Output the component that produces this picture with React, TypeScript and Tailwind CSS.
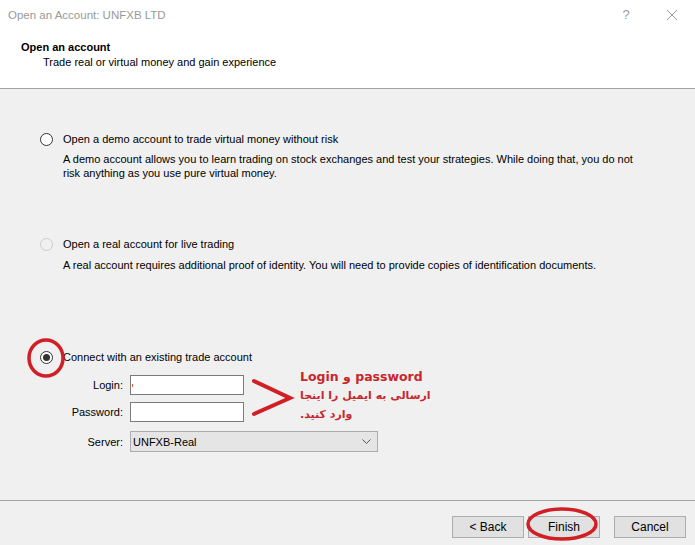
import React from 'react';

const ui = "font-['Liberation_Sans',Arial,sans-serif] text-[11px] leading-[14px] text-black";

function Radio({ state }: { state: 'off' | 'on' | 'disabled' }) {
  if (state === 'disabled') {
    return <span className="w-[13px] h-[13px] rounded-full border border-[#cccccc] bg-[#f0f0f0] shrink-0" />;
  }
  return (
    <span className="w-[13px] h-[13px] rounded-full border border-[#333333] bg-white shrink-0 flex items-center justify-center">
      {state === 'on' && <span className="w-[7px] h-[7px] rounded-full bg-[#333333]" />}
    </span>
  );
}

function Option({ state, label, children, className }: { state: 'off' | 'on' | 'disabled'; label: string; children?: React.ReactNode; className?: string }) {
  return (
    <div className={className}>
      <div className="flex items-center gap-[10px] pl-[40px]">
        <Radio state={state} />
        <span>{label}</span>
      </div>
      {children}
    </div>
  );
}

function Button({ label, className }: { label: string; className?: string }) {
  return (
    <button className={`w-[72px] h-[22px] bg-[#e1e1e1] border border-[#adadad] text-[12px] text-black ${className ?? ''}`}>
      {label}
    </button>
  );
}

export default function App() {
  return (
    <div className={`${ui} relative w-[695px] h-[545px] bg-[#f0f0f0] flex flex-col overflow-hidden`}>
      {/* Title bar */}
      <div className="h-[30px] bg-white flex items-center justify-between">
        <span className="pl-[8px] text-[11.5px] text-[#999999]">Open an Account: UNFXB LTD</span>
        <div className="flex items-center text-[#9a9a9a]">
          <span className="w-[46px] text-center text-[13px]">?</span>
          <svg width="46" height="30" viewBox="0 0 46 30">
            <path d="M18 10 L28 20 M28 10 L18 20" stroke="#9a9a9a" strokeWidth="1" />
          </svg>
        </div>
      </div>

      {/* Wizard header */}
      <div className="h-[59px] bg-white border-b border-[#a0a0a0] pt-[10px]">
        <div className="pl-[21px] font-bold">Open an account</div>
        <div className="pl-[43px] mt-[1px]">Trade real or virtual money and gain experience</div>
      </div>

      {/* Options */}
      <div className="flex-1">
        <Option state="off" label="Open a demo account to trade virtual money without risk" className="mt-[43px]">
          <p className="pl-[63px] pr-[50px] mt-[6px]">
            A demo account allows you to learn trading on stock exchanges and test your strategies. While doing that, you do not risk anything as you use pure virtual money.
          </p>
        </Option>

        <Option state="disabled" label="Open a real account for live trading" className="mt-[57px]">
          <p className="pl-[63px] mt-[7px]">
            A real account requires additional proof of identity. You will need to provide copies of identification documents.
          </p>
        </Option>

        <Option state="on" label="Connect with an existing trade account" className="mt-[78px]">
          <div className="mt-[11px] grid grid-cols-[123px_auto] items-center gap-x-[7px] gap-y-[7px]">
            <span className="text-right">Login:</span>
            <div className="w-[114px] h-[20px] bg-white border border-[#7a7a7a] flex items-center">
              <span className="ml-[1px] w-[1px] h-[3px] bg-[#e06030]" />
            </div>
            <span className="text-right">Password:</span>
            <div className="w-[114px] h-[20px] bg-white border border-[#7a7a7a]" />
            <span className="text-right mt-[2px]">Server:</span>
            <div className="mt-[2px] w-[248px] h-[21px] bg-[#e5e5e5] border border-[#acacac] flex items-center justify-between pl-[2px] pr-[6px]">
              <span>UNFXB-Real</span>
              <svg width="9" height="6" viewBox="0 0 9 6">
                <path d="M0.5 0.5 L4.5 4.5 L8.5 0.5" fill="none" stroke="#555" strokeWidth="1" />
              </svg>
            </div>
          </div>
        </Option>
      </div>

      {/* Buttons */}
      <div className="h-[45px] border-t border-[#a0a0a0] flex items-start pt-[15px] pl-[452px] gap-[4px]">
        <Button label="< Back" />
        <Button label="Finish" />
        <Button label="Cancel" className="ml-[10px]" />
      </div>

      {/* Red hand-drawn notes on top */}
      <svg className="absolute left-0 top-0 pointer-events-none" width="695" height="545" viewBox="0 0 695 545">
        <ellipse cx="46" cy="358" rx="17" ry="18" fill="none" stroke="#d21f26" strokeWidth="3.5" />
        <path d="M254 381 L290 398 L254 414" fill="none" stroke="#d21f26" strokeWidth="4" strokeLinecap="round" strokeLinejoin="miter" />
        <ellipse cx="562" cy="524" rx="34" ry="15" fill="none" stroke="#d21f26" strokeWidth="3.5" />
      </svg>
      <div className="absolute left-[300px] top-[367px] flex flex-col items-start text-[#c8262c] font-bold font-['DejaVu_Sans',sans-serif] text-[12.5px] leading-[19px]">
        <span className="w-fit">Login و password</span>
        <span dir="rtl" className="w-fit text-[11px]">ارسالی به ایمیل را اینجا</span>
        <span dir="rtl" className="w-fit text-[11px]">وارد کنید.</span>
      </div>
    </div>
  );
}
